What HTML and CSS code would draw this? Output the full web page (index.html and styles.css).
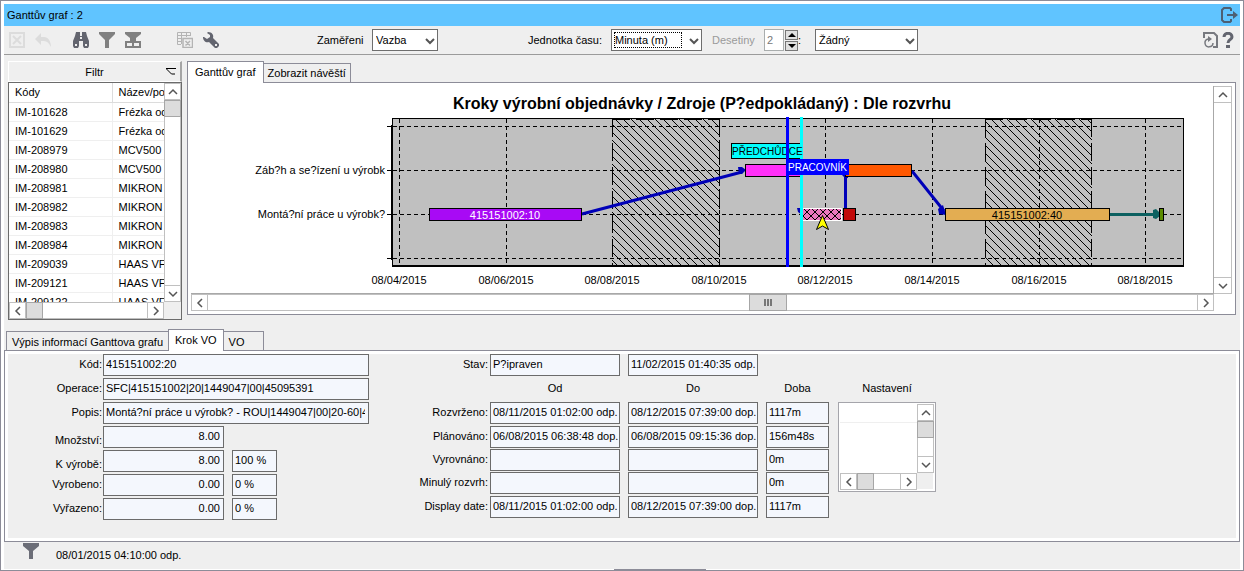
FILE: index.html
```html
<!DOCTYPE html>
<html lang="cs">
<head>
<meta charset="utf-8">
<title>Ganttův graf : 2</title>
<link rel="stylesheet" href="styles.css">
</head>
<body>
<svg class="sprite" aria-hidden="true">
  <symbol id="up" viewBox="0 0 10 10"><path d="M1 7 5 3 9 7"/></symbol>
  <symbol id="down" viewBox="0 0 10 10"><path d="M1 3 5 7 9 3"/></symbol>
  <symbol id="left" viewBox="0 0 10 10"><path d="M7 1 3 5 7 9"/></symbol>
  <symbol id="right" viewBox="0 0 10 10"><path d="M3 1 7 5 3 9"/></symbol>
</svg>
<div class="window">
  <header class="titlebar">
    <h1 class="title">Ganttův graf : 2</h1>
    <button class="tool exit" aria-label="Zavřít"><svg width="17" height="16" viewBox="0 0 17 16"><path d="M10 4V2L9 1H3L1 3V13L3 15H9L10 14V12" fill="none" stroke="#4d5f73" stroke-width="2"/><path d="M6 7H12V4L17 8 12 12V9H6Z" fill="#4d5f73"/></svg></button>
  </header>

  <div class="toolbar">
    <div class="tools">
      <button class="tool" disabled aria-label="Zrušit"><svg width="16" height="16" viewBox="0 0 16 16" fill="none" stroke="#dcdcdc" stroke-width="2"><path d="M1 1H15V15H1ZM4 4 12 12M12 4 4 12"/></svg></button>
      <button class="tool" disabled aria-label="Zpět"><svg width="16" height="16" viewBox="0 0 16 16" fill="#dcdcdc"><path d="M0 7 6 1V5H9C13 5 16 9 16 15 14 11 12 9 9 9H6V13Z"/></svg></button>
    </div>
    <div class="tools">
      <button class="tool" aria-label="Hledat"><svg width="18" height="16" viewBox="0 0 18 16" fill="#63656f"><path d="M4 0H8V4H10V0H14L15 4 17 9V14L16 16H12L11 14V9H7V14L6 16H2L1 14V9L3 4Z"/><path d="M3 12H5V14H3ZM13 12H15V14H13ZM8 5H10V7H8Z" fill="#efefef"/></svg></button>
      <button class="tool" aria-label="Filtr"><svg width="16" height="16" viewBox="0 0 16 16" fill="#808080"><path d="M0 0H16V2L10 8V16H6V8L0 2Z"/></svg></button>
      <button class="tool" aria-label="Rozšířený filtr"><svg width="18" height="16" viewBox="0 0 18 16" fill="#808080"><path d="M1 0H17V2L12 6V9H17V16H1V9H6V6L1 2Z"/><path d="M3 11H8V14H3ZM10 11H15V14H10Z" fill="#efefef"/></svg></button>
    </div>
    <div class="tools">
      <button class="tool" disabled aria-label="Vymazat tabulku"><svg width="16" height="16" viewBox="0 0 16 16" fill="none" stroke="#b4b4b4"><path d="M4 12.500H.5V.5H13.500V4M.5 3.500H13M.5 6.500H5M.5 9.500H5M4.500 1V12M9.500 1V5"/><path d="M6 6.500H15.500V15.500H6ZM8.500 9 13 13.500M13 9 8.500 13.500" stroke-width="1.500"/></svg></button>
      <button class="tool" aria-label="Nastavení"><svg width="16" height="16" viewBox="0 0 16 16" fill="#63656f"><path d="M5 0C9 0 11 3 10 6L16 12V14L14 16H12L6 10C3 11 0 9 0 5H1L4 7 7 5V3L4 1Z"/><path d="M12 12H14V14H12Z" fill="#efefef"/></svg></button>
    </div>
    <label class="focus-label" for="focus">Zaměřeni</label>
    <span class="combo focus-combo"><select id="focus"><option>Vazba</option></select><svg><use href="#down"/></svg></span>
    <label class="unit-label" for="unit">Jednotka času:</label>
    <span class="combo unit-combo"><select id="unit"><option>Minuta (m)</option></select><svg><use href="#down"/></svg></span>
    <label class="decimals-label" for="decimals">Desetiny</label>
    <input class="decimals" id="decimals" value="2" disabled>
    <span class="spinner">
      <button aria-label="Více"><svg width="8" height="4" viewBox="0 0 8 4"><path d="M0 4 4 0 8 4Z"/></svg></button>
      <button aria-label="Méně"><svg width="8" height="4" viewBox="0 0 8 4"><path d="M0 0 4 4 8 0Z"/></svg></button>
    </span>
    <label class="colon" for="mode">:</label>
    <span class="combo mode-combo"><select id="mode"><option>Žádný</option></select><svg><use href="#down"/></svg></span>
    <div class="tools end">
      <button class="tool narrow" aria-label="Obnovit"><svg width="16" height="16" viewBox="0 0 16 16" fill="none" stroke="#77797f" stroke-width="2"><path d="M1 6V1H11L14 4V15H10"/><path d="M5 7A4 4 0 1 0 10 11" stroke-width="1.500"/><path d="M5 4 9 7 5 10Z" fill="#77797f" stroke="none"/></svg></button>
      <button class="tool narrow" aria-label="Nápověda"><svg width="12" height="16" viewBox="0 0 12 16"><path d="M2 5C2 0 10 0 10 5 10 8 6 7 6 11" fill="none" stroke="#63656f" stroke-width="3"/><path d="M4 13H8V16H4Z" fill="#63656f"/></svg></button>
    </div>
  </div>

  <main class="upper">
    <section class="filter">
      <button class="filter-head"><span>Filtr</span><svg width="10" height="7" viewBox="0 0 10 7" fill="none" stroke="#000"><path d="M0 .5H10M.5 1 5.500 6H9"/></svg></button>
      <div class="list">
        <div class="list-view">
          <table>
            <thead><tr><th>Kódy</th><th>Název/popis</th></tr></thead>
            <tbody>
              <tr><td>IM-101628</td><td>Frézka od</td></tr>
              <tr><td>IM-101629</td><td>Frézka od</td></tr>
              <tr><td>IM-208979</td><td>MCV500 C</td></tr>
              <tr><td>IM-208980</td><td>MCV500 C</td></tr>
              <tr><td>IM-208981</td><td>MIKRON V</td></tr>
              <tr><td>IM-208982</td><td>MIKRON V</td></tr>
              <tr><td>IM-208983</td><td>MIKRON V</td></tr>
              <tr><td>IM-208984</td><td>MIKRON V</td></tr>
              <tr><td>IM-209039</td><td>HAAS VF</td></tr>
              <tr><td>IM-209121</td><td>HAAS VF</td></tr>
              <tr><td>IM-209122</td><td>HAAS VF</td></tr>
            </tbody>
          </table>
        </div>
        <div class="scroll vertical"><button aria-label="Nahoru"><svg><use href="#up"/></svg></button><i class="thumb"></i><button aria-label="Dolů"><svg><use href="#down"/></svg></button></div>
        <div class="scroll horizontal"><button aria-label="Vlevo"><svg><use href="#left"/></svg></button><i class="thumb"></i><button aria-label="Vpravo"><svg><use href="#right"/></svg></button></div>
      </div>
    </section>

    <section class="chart">
      <div class="tabs" role="tablist">
        <button class="tab selected" role="tab" aria-selected="true">Ganttův graf</button>
        <button class="tab" role="tab" aria-selected="false">Zobrazit návěští</button>
      </div>
      <div class="chart-panel">
        <div class="chart-view">
          <svg class="gantt" width="1021" height="207" viewBox="191 86 1021 207" role="img" aria-label="Ganttův graf">
            <defs>
              <pattern id="hatch" width="8" height="8" patternUnits="userSpaceOnUse"><path d="M-1-1 9 9M-1 7 1 9M7-1 9 1" stroke="#000" shape-rendering="crispEdges"/></pattern>
              <pattern id="cross" x="803" y="208" width="8" height="8" patternUnits="userSpaceOnUse"><path d="M0 0 8 8M8 0 0 8" stroke="#000" stroke-width="1"/></pattern>
            </defs>
            <text class="chart-title" x="702" y="109">Kroky výrobní objednávky / Zdroje (P?edpokládaný) : Dle rozvrhu</text>
            <g shape-rendering="crispEdges">
              <path d="M392 118H1184V266H392Z" fill="#c0c0c0"/>
              <path d="M612 119H719V265H612ZM985 119H1092V265H985Z" fill="url(#hatch)"/>
              <path d="M612.500 119V265M719.500 119V265M985.500 119V265M1091.500 119V265M612 119.500H719M985 119.500H1092" fill="none" stroke="#000" stroke-dasharray="18 6"/>
              <path d="M399.500 119V265M506.500 119V265M719.500 119V265M825.500 119V265M932.500 119V265M1039.500 119V265M1145.500 119V265M393 126.500H1181M393 170.500H1181M393 214.500H1181M393 258.500H1181" stroke="#000" stroke-dasharray="4 3"/>
              <path d="M392.500 118.500H1183.500V265.500H392.500Z" fill="none" stroke="#000"/>
              <path d="M392 265H1184V267H392ZM391 125H393V260H391ZM387 126H391V127H387ZM387 170H391V171H387ZM387 214H391V215H387ZM387 258H391V259H387Z"/>
            </g>
            <g class="labels end">
              <text x="385" y="174">Záb?h a se?ízení u výrobk</text>
              <text x="385" y="218">Montá?ní práce u výrobk?</text>
            </g>
            <g class="labels middle">
              <text x="399" y="284">08/04/2015</text><text x="506" y="284">08/06/2015</text><text x="612" y="284">08/08/2015</text><text x="719" y="284">08/10/2015</text><text x="825" y="284">08/12/2015</text><text x="932" y="284">08/14/2015</text><text x="1039" y="284">08/16/2015</text><text x="1145" y="284">08/18/2015</text>
            </g>
            <g stroke="#0000b8" stroke-width="3" fill="none">
              <path d="M582 214 742 172M912 171 944 211M845.500 172V210M799 210H802"/>
            </g>
            <path d="M738 167H742L746 170 742 174H739ZM938 209 943 205 946 215 939 214ZM797 208H802V215L798 212ZM841 174H848V178H845Z" fill="#0000b8"/>
            <path d="M1110 213H1153V210L1156 209 1160 213V216L1156 219 1153 218V216H1110Z" fill="#0c6060"/>
            <g stroke="#000" shape-rendering="crispEdges">
              <rect x="429.500" y="208.500" width="152" height="12" fill="#a80af5"/>
              <rect x="745.500" y="164.500" width="56" height="12" fill="#ff30f8"/>
              <rect x="845.500" y="164.500" width="66" height="12" fill="#ff5800"/>
              <rect x="945.500" y="208.500" width="164" height="12" fill="#e3ad52"/>
              <rect x="1159.500" y="208.500" width="4" height="12" fill="#5c8c00"/>
              <rect x="843.500" y="208.500" width="12" height="12" fill="#c20a0a"/>
              <rect x="731.500" y="143.500" width="70" height="15" fill="#00ffff"/>
            </g>
            <path d="M803 208H841V221H803Z" fill="#ea78bd"/>
            <path d="M803 208H841V221H803Z" fill="url(#cross)"/>
            <path d="M802.500 208.500H841.500V220.500H802.500Z" fill="none" stroke="#fff"/>
            <path d="M822.500 215.500 816.500 229.500 822.500 226 828.500 229.500Z" fill="#ff0" stroke="#000"/>
            <g class="flags">
              <path d="M800 117H803V267H800Z" fill="#0ff"/>
              <text x="732" y="155">PŘEDCHŮDCE</text>
              <path d="M786 117H789V267H786Z" fill="#00f"/>
              <path d="M788 159H849V175H788Z" fill="#00f"/>
              <text x="788" y="171" fill="#fff">PRACOVNÍK</text>
            </g>
            <g class="labels middle">
              <text x="505" y="219" fill="#fff">415151002:10</text>
              <text x="1027" y="219">415151002:40</text>
            </g>
          </svg>
        </div>
        <div class="scroll vertical"><button aria-label="Nahoru"><svg><use href="#up"/></svg></button><button aria-label="Dolů"><svg><use href="#down"/></svg></button></div>
        <div class="scroll horizontal"><button aria-label="Vlevo"><svg><use href="#left"/></svg></button><i class="thumb grip"></i><button aria-label="Vpravo"><svg><use href="#right"/></svg></button></div>
      </div>
    </section>
  </main>

  <div class="tabs lower-tabs" role="tablist">
    <button class="tab" role="tab" aria-selected="false">Výpis informací Ganttova grafu</button>
    <button class="tab selected" role="tab" aria-selected="true">Krok VO</button>
    <button class="tab short" role="tab" aria-selected="false">VO</button>
  </div>
  <section class="details">
    <div class="sheet">
      <div class="grid step">
        <label for="code">Kód:</label><input class="wide" id="code" value="415151002:20" readonly>
        <label for="op">Operace:</label><input class="wide" id="op" value="SFC|415151002|20|1449047|00|45095391" readonly>
        <label for="desc">Popis:</label><input class="wide" id="desc" value="Montá?ní práce u výrobk? - ROU|1449047|00|20-60|45095391" readonly>
        <label class="low" for="qty">Množství:</label><input class="number" id="qty" value="8.00" readonly>
        <label class="low" for="todo">K výrobě:</label><input class="number" id="todo" value="8.00" readonly><input class="percent" aria-label="K výrobě %" value="100 %" readonly>
        <label for="done">Vyrobeno:</label><input class="number" id="done" value="0.00" readonly><input class="percent" aria-label="Vyrobeno %" value="0 %" readonly>
        <label for="scrap">Vyřazeno:</label><input class="number" id="scrap" value="0.00" readonly><input class="percent" aria-label="Vyřazeno %" value="0 %" readonly>
      </div>
      <div class="grid times">
        <label for="state">Stav:</label><input id="state" value="P?ipraven" readonly><input aria-label="Stav k" value="11/02/2015 01:40:35 odp." readonly>
        <span class="head first">Od</span><span class="head">Do</span><span class="head">Doba</span>
        <label for="r1">Rozvrženo:</label><input id="r1" value="08/11/2015 01:02:00 odp." readonly><input aria-label="Rozvrženo do" value="08/12/2015 07:39:00 dop." readonly><input aria-label="Rozvrženo doba" value="1117m" readonly>
        <label for="r2">Plánováno:</label><input id="r2" value="06/08/2015 06:38:48 dop." readonly><input aria-label="Plánováno do" value="06/08/2015 09:15:36 dop." readonly><input aria-label="Plánováno doba" value="156m48s" readonly>
        <label for="r3">Vyrovnáno:</label><input id="r3" readonly><input aria-label="Vyrovnáno do" readonly><input aria-label="Vyrovnáno doba" value="0m" readonly>
        <label for="r4">Minulý rozvrh:</label><input id="r4" readonly><input aria-label="Minulý rozvrh do" readonly><input aria-label="Minulý rozvrh doba" value="0m" readonly>
        <label for="r5">Display date:</label><input id="r5" value="08/11/2015 01:02:00 odp." readonly><input aria-label="Display date do" value="08/12/2015 07:39:00 dop." readonly><input aria-label="Display date doba" value="1117m" readonly>
      </div>
      <div class="settings">
        <span class="settings-title">Nastavení</span>
        <div class="list settings-list">
          <div class="list-view"><div class="blank-head"></div></div>
          <div class="scroll vertical"><button aria-label="Nahoru"><svg><use href="#up"/></svg></button><i class="thumb"></i><button aria-label="Dolů"><svg><use href="#down"/></svg></button></div>
          <div class="scroll horizontal"><button aria-label="Vlevo"><svg><use href="#left"/></svg></button><i class="thumb"></i><button aria-label="Vpravo"><svg><use href="#right"/></svg></button></div>
        </div>
      </div>
    </div>
  </section>

  <footer class="status">
    <svg width="16" height="16" viewBox="0 0 16 16" fill="#6b6d77"><path d="M0 0H16V3L10 8V16H6V8L0 3Z"/></svg>
    <span>08/01/2015 04:10:00 odp.</span>
    <i class="handle"></i>
  </footer>
</div>
</body>
</html>
```

FILE: styles.css
```css
* { box-sizing: border-box; }
body, button, input, select {
  font-family: "Liberation Sans", Arial, sans-serif;
  font-size: 11px;
  line-height: 14px;
  color: #000;
}
body { margin: 0; }
button { padding: 0; border: 0; background: none; }
.sprite { position: absolute; width: 0; height: 0; }

.window {
  min-height: 100vh;
  display: flex;
  flex-direction: column;
  padding: 3px 3px 1px;
  border: 1px solid #8c8c98;
  background: #fff;
}
.titlebar {
  height: 22px;
  display: flex;
  align-items: center;
  justify-content: space-between;
  padding: 0 0 0 3px;
  background: #60c4ff;
}
.title { margin: 0; font-size: 11px; font-weight: normal; }

/* Toolbar */
.toolbar {
  height: 29px;
  display: flex;
  align-items: center;
  background: #efefef;
  border-bottom: 1px solid #9b9b9b;
  white-space: nowrap;
}
.tools { display: flex; margin-right: 12px; }
.tools + .tools + .tools { margin-left: 14px; }
.tool { width: 26px; height: 22px; display: flex; align-items: center; justify-content: center; }
.tool.narrow { width: 17px; }
.tool.exit { width: 22px; }
.tools.end { margin: 0 4px 0 auto; }
.focus-label { width: 55px; margin-left: 81px; }
.unit-label { width: 83px; margin-left: 90px; }
.combo { position: relative; height: 22px; }
.combo select {
  appearance: none;
  width: 100%;
  height: 22px;
  padding: 0 3px;
  border: 1px solid #6e6e6e;
  border-radius: 0;
  background: #fff;
}
.combo svg {
  position: absolute;
  right: 3px;
  top: 7px;
  width: 10px;
  height: 10px;
  fill: none;
  stroke: #555;
  stroke-width: 2;
  pointer-events: none;
}
.focus-combo { width: 66px; }
.unit-combo { width: 91px; }
.unit-combo::before {
  content: "";
  position: absolute;
  inset: 3px 20px 3px 3px;
  border: 1px dotted #000;
  pointer-events: none;
}
.mode-combo { width: 103px; }
.decimals-label { width: 52px; margin-left: 10px; color: #9a9a9a; }
.decimals {
  width: 20px;
  height: 22px;
  padding: 0 2px;
  border: 1px solid #a9adad;
  background: #fff;
  color: #777;
}
.spinner { width: 13px; margin-left: 1px; display: grid; gap: 1px; }
.spinner button {
  height: 10px;
  display: grid;
  place-items: center;
  border: 1px solid #777;
  background: #e0e0e0;
}
.colon { width: 17px; }

/* Scroll bars */
.scroll { display: flex; background: #fff; border: 1px solid #c0c0c0; }
.scroll.vertical { flex-direction: column; width: 17px; }
.scroll.horizontal { height: 17px; }
.scroll button { display: grid; place-items: center; flex: none; width: 15px; height: 16px; }
.scroll.horizontal button { width: 16px; height: 15px; }
.scroll svg { width: 10px; height: 10px; fill: none; stroke: #555; stroke-width: 1.5; }
.scroll button:last-child { margin-top: auto; border-top: 1px solid #c0c0c0; }
.horizontal button:last-child { margin: 0 0 0 auto; border-top: 0; border-left: 1px solid #c0c0c0; }
.vertical button:first-child { border-bottom: 1px solid #c0c0c0; }
.horizontal button:first-child { border-right: 1px solid #c0c0c0; }
.thumb { flex: none; width: 17px; height: 17px; margin: 0 -1px; border: 1px solid #a6a6a6; background: #dcdcdc; }
.horizontal .thumb { margin: -1px 0; }

/* Tabs */
.tabs { display: flex; align-items: flex-end; }
.tab {
  height: 19px;
  padding: 0 4px;
  border: 1px solid #8c8c98;
  border-width: 1px 1px 0 0;
  background: #efefef;
  white-space: nowrap;
}
.tab.selected {
  position: relative;
  height: 22px;
  padding: 0 7px 2px;
  margin-bottom: -1px;
  border-left-width: 1px;
  background: #fff;
}

/* Filter list and chart */
.upper {
  flex: 1;
  min-height: 0;
  display: flex;
  gap: 5px;
  padding: 6px 4px 9px;
  background: #efefef;
}
.filter { flex: none; width: 174px; display: flex; flex-direction: column; }
.filter-head {
  height: 21px;
  display: flex;
  align-items: center;
  padding: 0 4px 0 0;
  border: 1px solid #fff;
  border-right: 2px solid #a5a5a5;
}
.filter-head span { flex: 1; padding-left: 14px; }
.list {
  flex: 1;
  min-height: 0;
  display: grid;
  grid-template: 1fr 17px / minmax(0, 1fr) 17px;
  border: 1px solid #6b6b6b;
  background: #efefef;
}
.list-view { overflow: hidden; height: 0; min-height: 100%; background: #fff; }
.list table { width: 200px; border-collapse: collapse; table-layout: fixed; white-space: nowrap; }
.list th, .list td {
  height: 19px;
  padding: 0 0 0 6px;
  border-right: 1px solid #efefef;
  border-bottom: 1px solid #efefef;
  font-weight: normal;
  text-align: left;
}
.list th { border-color: #dcdcdc; }
.list th:first-child { width: 103px; }

.chart { flex: 1; min-width: 0; display: flex; flex-direction: column; margin-bottom: 5px; }
.chart-panel {
  flex: 1;
  display: grid;
  grid-template: 1fr 17px / minmax(0, 1fr) 18px;
  padding: 3px;
  border: 1px solid #8c8c98;
  background: #fff;
}
.chart-view { overflow: hidden; border: 1px solid #a8a8a8; border-width: 0 1px 1px 0; }
.gantt { display: block; }
.chart-panel .vertical { width: 18px; border-left: 0; justify-self: end; }
.chart-panel .vertical button { width: 17px; }
.chart-title { font-size: 16px; font-weight: bold; text-anchor: middle; }
.labels { font-size: 11px; }
.labels.end { text-anchor: end; }
.labels.middle { text-anchor: middle; }
.flags { font-size: 10px; }
.horizontal .thumb.grip {
  width: 38px;
  margin: -1px auto -1px 53%;
  background: linear-gradient(90deg, #777 2px, transparent 2px 3px, #777 3px 5px, transparent 5px 6px, #777 6px) center / 8px 7px no-repeat #dcdcdc;
}
.horizontal .grip + button:last-child { margin-left: 0; }

/* Detail form */
.lower-tabs { padding: 0 2px; background: #efefef; }
.lower-tabs .tab { padding: 1px 5px 0; }
.lower-tabs .tab:first-child { border-left-width: 1px; border-right-width: 0; }
.lower-tabs .selected { padding: 0 6px 2px; }
.lower-tabs .short { width: 40px; text-align: left; }
.details { padding: 3px; border: 1px solid #8c8c98; background: #fff; }
.sheet { display: flex; align-items: flex-start; padding-bottom: 16px; background: #efefef; }
.grid { display: grid; align-items: start; }
.grid label { padding: 3px 1px 0 0; text-align: right; }
.grid input {
  width: 100%;
  height: 22px;
  padding: 0 3px 2px 2px;
  border: 1px solid #6b6b6b;
  background: #f4f7fd;
}
.step { grid-template-columns: 95px 121px 53px 92px; grid-auto-rows: 24px; }
.step .wide { grid-column: 2 / 5; }
.step .low { padding-top: 7px; }
.step label { grid-column: 1; }
.step .number { text-align: right; }
.grid .percent { width: 45px; margin-left: 8px; }
.times {
  margin-left: 22px;
  grid-template-columns: 91px 130px 130px 63px;
  grid-template-rows: 24px 24px 24px 23px 23px 24px 22px;
  column-gap: 8px;
}
.times input { padding-right: 0; }
.times label { grid-column: 1; margin-right: -7px; }
.head { padding-top: 3px; text-align: center; }
.head.first { grid-column: 2; }
.settings { width: 98px; margin: 27px 0 0 9px; display: grid; gap: 7px; text-align: center; }
.settings-list { height: 90px; padding: 1px; border-color: #a5a5ab; background: linear-gradient(#efefef, #efefef) right 2px bottom 2px / 17px 17px no-repeat #fff; }
.blank-head { height: 19px; border-bottom: 1px solid #efefef; }

/* Status line */
.status {
  position: relative;
  height: 27px;
  display: flex;
  gap: 17px;
  padding: 1px 19px 0;
  background: #efefef;
}
.status span { padding-top: 5px; }
.handle {
  position: absolute;
  left: 50%;
  bottom: -1px;
  width: 92px;
  height: 1px;
  margin-left: -8px;
  background: #8c8c98;
}
```
